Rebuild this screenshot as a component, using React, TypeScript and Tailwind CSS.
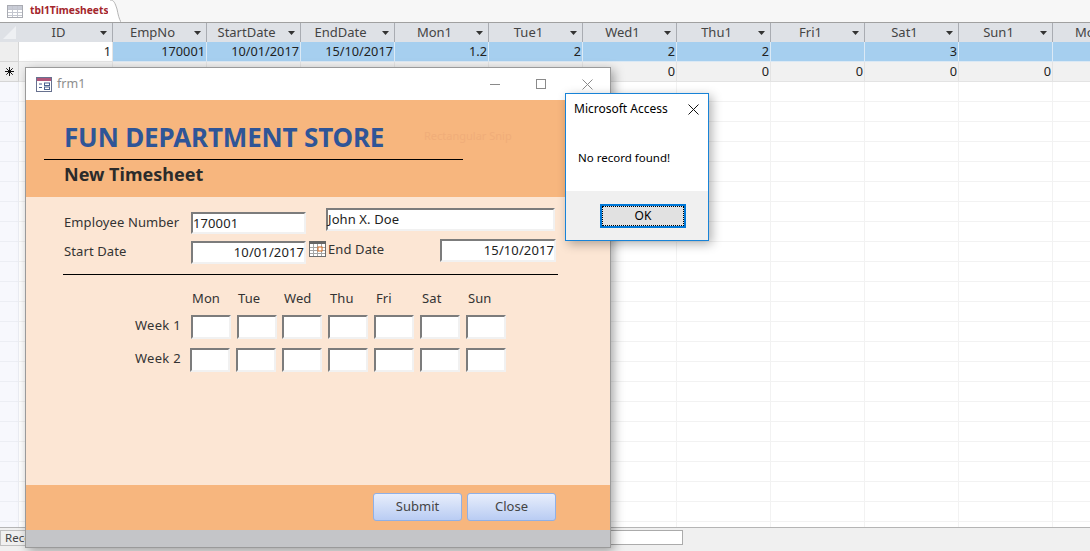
const COLS = ["ID", "EmpNo", "StartDate", "EndDate", "Mon1", "Tue1", "Wed1", "Thu1", "Fri1", "Sat1", "Sun1", "Mon2"];
const ROW1 = ["1", "170001", "10/01/2017", "15/10/2017", "1.2", "2", "2", "2", "", "3", "", ""];
const ROW2 = ["", "", "", "", "0", "0", "0", "0", "0", "0", "0", ""];
const DAYS = ["Mon", "Tue", "Wed", "Thu", "Fri", "Sat", "Sun"];
const EMPTY_ROWS = Array.from({ length: 23 }, (_, i) => i);

function TableIcon() {
  return (
    <svg width="16" height="13" viewBox="0 0 16 13" className="shrink-0">
      <rect x="0.5" y="0.5" width="15" height="12" fill="#fff" stroke="#a9abb2" />
      <rect x="1" y="1" width="14" height="3" fill="#c9ccd6" />
      <path d="M1 4.5h14M1 7.5h14M1 10.5h14M5.5 1v11M10.5 1v11" stroke="#c3c6cf" />
    </svg>
  );
}

function FormIcon() {
  return (
    <svg width="16" height="15" viewBox="0 0 16 15" className="shrink-0">
      <rect x="0.5" y="0.5" width="15" height="14" fill="#fff" stroke="#67718f" />
      <rect x="1" y="1" width="14" height="3" fill="#b0567a" />
      <path d="M3 7h3M3 10.5h3" stroke="#49608f" />
      <rect x="8.5" y="6" width="5" height="2.5" fill="#fff" stroke="#49608f" />
      <rect x="8.5" y="10" width="5" height="2.5" fill="#fff" stroke="#49608f" />
    </svg>
  );
}

function CalendarIcon() {
  return (
    <svg width="17" height="16" viewBox="0 0 17 16" className="shrink-0">
      <rect x="0.5" y="0.5" width="16" height="15" fill="#fff" stroke="#6e6e6e" />
      <rect x="0" y="0" width="17" height="3" fill="#666" />
      <path d="M4.5 3v12M8.5 3v12M12.5 3v12M1 6.5h15M1 9.5h15M1 12.5h15" stroke="#a5a5a5" />
      <rect x="9" y="6" width="4" height="4" fill="#fff" stroke="#d2691e" />
    </svg>
  );
}

function SortArrow() {
  return (
    <svg width="7" height="4" viewBox="0 0 7 4" className="absolute top-[8px] right-[5px]">
      <path d="M0 0h7L3.5 4z" fill="#333" />
    </svg>
  );
}

function NewRowMark() {
  return (
    <svg width="9" height="9" viewBox="0 0 9 9">
      <path d="M4.5 0v9M0 4.5h9M1.3 1.3l6.4 6.4M7.7 1.3l-6.4 6.4" stroke="#111" strokeWidth="1" />
    </svg>
  );
}

function SunkenInput({ value, className, right }: { value?: string; className: string; right?: boolean }) {
  return (
    <div
      className={`${className} ${right ? "justify-end" : "justify-start"} flex items-center border-2 border-t-[#7c7c7c] border-r-[#f1f1f1] border-b-[#f1f1f1] border-l-[#7c7c7c] bg-white text-[13px] leading-none text-[#222]`}
    >
      {value}
    </div>
  );
}

function GridRow({ cells, selected }: { cells: string[]; selected?: boolean }) {
  return (
    <div className="flex h-[20px] shrink-0 text-[12.75px] leading-[19px] text-[#222]">
      {cells.map((c, i) => (
        <div
          key={i}
          className={`w-[94px] shrink-0 border-r border-b pr-[1px] text-right ${
            selected
              ? i === 0
                ? "border-[#e4e4e4] bg-white"
                : "border-[#dbe9f5] bg-[#a6cfef]"
              : "border-[#e3e3e3] bg-[#f1f1f1]"
          }`}
        >
          {c}
        </div>
      ))}
    </div>
  );
}

function FormButton({ label }: { label: string }) {
  return (
    <button className="h-[28px] w-[89px] rounded-[3px] border border-[#8fb0e6] bg-gradient-to-b from-[#e8eefb] to-[#b9ccf3] text-[13px] leading-none text-[#444]">
      {label}
    </button>
  );
}

function FormWindow() {
  return (
    <div className="absolute top-[67px] left-[25px] flex h-[481px] w-[586px] flex-col border border-[#9a9a9a] bg-white shadow-[3px_3px_10px_rgba(0,0,0,0.35)]">
      <div className="flex h-[32px] shrink-0 items-center pr-[17px] pl-[10px]">
        <FormIcon />
        <span className="ml-[5px] text-[12.5px] text-[#8d8d8d]">frm1</span>
        <div className="ml-auto flex items-center gap-[36px]">
          <svg width="10" height="10" viewBox="0 0 10 10"><path d="M0 5.5h10" stroke="#8a8a8a" /></svg>
          <svg width="10" height="10" viewBox="0 0 10 10"><rect x="0.5" y="0.5" width="9" height="9" fill="none" stroke="#8a8a8a" /></svg>
          <svg width="11" height="11" viewBox="0 0 11 11"><path d="M0.5 0.5l10 10M10.5 0.5l-10 10" stroke="#8a8a8a" /></svg>
        </div>
      </div>

      <div className="relative h-[97px] shrink-0 bg-[#f7b67e]">
        <div className="pt-[20px] pl-[38px] text-[26px] leading-[34px] font-bold tracking-[-0.15px] text-[#2f5597]">
          FUN DEPARTMENT STORE
        </div>
        <div className="mt-[5px] ml-[18px] h-px w-[419px] bg-black" />
        <div className="pl-[38px] text-[18px] leading-[28px] font-bold text-[#2b2b2b]">New Timesheet</div>
        <span className="absolute top-[28px] left-[398px] text-[11px] text-[#f0ad79]">Rectangular Snip</span>
      </div>

      <div className="flex flex-1 flex-col bg-[#fce6d4] pt-[11px] pl-[38px] text-[13px] tracking-[0.1px] text-[#333]">
        <div className="flex h-[31px] items-start">
          <span className="mt-[5px] w-[127px] leading-[18px]">Employee Number</span>
          <SunkenInput value="170001" className="mt-[4px] h-[22px] w-[115px]" />
          <SunkenInput value="John X. Doe" className="ml-[20px] h-[23px] w-[229px]" />
        </div>
        <div className="flex h-[35px] items-start">
          <span className="mt-[3px] w-[127px] leading-[18px]">Start Date</span>
          <SunkenInput value="10/01/2017" right className="mt-[2px] h-[23px] w-[115px]" />
          <div className="mt-[2px] ml-[3px]"><CalendarIcon /></div>
          <span className="mt-[1px] ml-[2px] w-[112px] leading-[18px]">End Date</span>
          <SunkenInput value="15/10/2017" right className="h-[23px] w-[116px]" />
        </div>
        <div className="ml-[-1px] h-px w-[495px] bg-black" />

        <div className="mt-[15px] ml-[128px] flex h-[16px] items-center leading-none">
          {DAYS.map((d) => (
            <span key={d} className="w-[46px]">{d}</span>
          ))}
        </div>
        <div className="mt-[9px] flex h-[24px] items-center">
          <span className="w-[117px] pb-[3px] text-right tracking-[0.3px]">Week 1</span>
          <div className="ml-[10px] flex gap-[6px]">
            {DAYS.map((d, i) => (
              <SunkenInput key={d} className={`h-[24px] w-[40px] ${i === 2 ? "ml-[-1px]" : ""}`} />
            ))}
          </div>
        </div>
        <div className="mt-[9px] flex h-[24px] items-center">
          <span className="w-[117px] pb-[2px] text-right tracking-[0.3px]">Week 2</span>
          <div className="ml-[9px] flex gap-[6px]">
            {DAYS.map((d) => (
              <SunkenInput key={d} className="h-[24px] w-[40px]" />
            ))}
          </div>
        </div>
      </div>

      <div className="flex h-[45px] shrink-0 items-center justify-end gap-[5px] bg-[#f7b67e] pr-[54px] pb-[2px]">
        <FormButton label="Submit" />
        <FormButton label="Close" />
      </div>
      <div className="h-[17px] shrink-0 bg-[#c4c5c8]" />
    </div>
  );
}

function MessageBox() {
  return (
    <div className="absolute top-[93px] left-[565px] flex h-[148px] w-[144px] flex-col border border-[#1883d7] bg-white text-black shadow-[3px_3px_10px_rgba(0,0,0,0.3)]">
      <div className="flex h-[30px] items-center justify-between pr-[9px] pl-[8px] text-[12px]">
        <span>Microsoft Access</span>
        <svg width="11" height="11" viewBox="0 0 11 11"><path d="M0.5 0.5l10 10M10.5 0.5l-10 10" stroke="#111" /></svg>
      </div>
      <div className="flex-1 pt-[25px] pl-[12px] text-[11.5px] leading-[18px]">No record found!</div>
      <div className="flex h-[49px] shrink-0 bg-[#f0f0f0] pt-[13px] pl-[34px]">
        <div className="h-[24px] w-[86px] border-2 border-[#0078d7]">
          <div className="flex h-full w-full items-center justify-center border border-dotted border-black bg-[#e1e1e1] text-[12px] leading-none">
            OK
          </div>
        </div>
      </div>
    </div>
  );
}

export default function App() {
  return (
    <div className="relative flex h-[551px] w-[1090px] flex-col overflow-hidden bg-white font-['Noto_Sans',sans-serif]">
      <div className="flex h-[22px] shrink-0 bg-[#f7f7f7]">
        <div className="flex w-[108px] items-center gap-[7px] bg-white pl-[7px]">
          <TableIcon />
          <span className="whitespace-nowrap text-[10.25px] font-bold text-[#a4262c]">tbl1Timesheets</span>
        </div>
        <svg width="13" height="22" viewBox="0 0 13 22" className="shrink-0">
          <path d="M0 0h2C6 0 7 3 9 9c1 5 2 10 4 13H0z" fill="#fff" />
          <path d="M2 0C6 0 7 3 9 9c1 5 2 10 4 13" fill="none" stroke="#b5b5b5" />
        </svg>
      </div>

      <div className="flex min-h-0 flex-1 flex-col overflow-hidden">
        <div className="flex h-[20px] shrink-0 border-t border-[#a0a0a0] bg-[#dee1e6]">
          <div className="w-[19px] shrink-0 p-[3px]">
            <svg width="13" height="13" viewBox="0 0 13 13"><path d="M13 0v13H0z" fill="#eef0f3" /></svg>
          </div>
          {COLS.map((c) => (
            <div key={c} className="relative w-[94px] shrink-0 border-r border-[#a9acb2] pr-[14px] text-center text-[13px] leading-[19px] text-[#444]">
              {c}
              <SortArrow />
            </div>
          ))}
        </div>
        <div className="flex">
          <div className="flex w-[19px] shrink-0 flex-col">
            <div className="h-[20px] border-r border-b border-[#d5d5d5] bg-[#eeeeee]" />
            <div className="flex h-[20px] items-center justify-center border-r border-b border-[#d5d5d5] bg-[#eeeeee]">
              <NewRowMark />
            </div>
          </div>
          <div className="flex flex-col">
            <GridRow cells={ROW1} selected />
            <GridRow cells={ROW2} />
          </div>
        </div>
        {EMPTY_ROWS.map((r) => (
          <div key={r} className="flex h-[20px] shrink-0">
            <div className="w-[19px] shrink-0 border-r border-b border-[#eceef4] bg-[#f7f8fd]" />
            {COLS.map((c) => (
              <div key={c} className="w-[94px] shrink-0 border-r border-b border-[#f2f2f2]" />
            ))}
          </div>
        ))}
      </div>

      <div className="flex h-[24px] shrink-0 items-start border-t border-[#b5b5b5] bg-[#f0f0f0] pt-[2px]">
        <div className="h-[16px] w-[40px] border border-[#c0c0c0] pl-[4px] text-[11.5px] leading-[14px] text-[#444]">Record</div>
        <div className="mr-[407px] ml-auto h-[15px] w-[120px] border border-[#ababab] bg-white" />
      </div>

      <FormWindow />
      <MessageBox />
    </div>
  );
}
